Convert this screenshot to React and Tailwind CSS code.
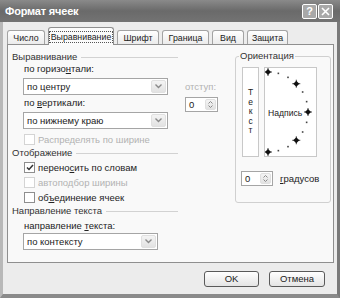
import React from "react";

const Chevron = () => (
  <svg width="7" height="5" viewBox="0 0 7 5">
    <path d="M0.5 0.5 L3.5 3.5 L6.5 0.5" fill="none" stroke="#8a8a8a" strokeWidth="1.4" />
  </svg>
);

const Select = ({ value, width }) => (
  <div className={`flex h-[17px] ${width} items-stretch border border-[#a5a5a5] bg-white`}>
    <div className="flex flex-1 items-center pl-[3px] text-[#222]">{value}</div>
    <div className="m-[1px] flex w-[15px] items-center justify-center rounded-[2px] border border-[#e0e0e0] bg-gradient-to-b from-[#f4f4f4] to-[#e2e2e2]">
      <Chevron />
    </div>
  </div>
);

const Spinner = ({ width }) => (
  <div className={`flex h-[15px] ${width} items-stretch border border-[#a5a5a5] bg-white`}>
    <div className="flex flex-1 items-center pl-[3px] text-[#222]">0</div>
    <div className="m-[1px] flex w-[11px] flex-col items-center justify-center gap-[1px] rounded-[2px] border border-[#e0e0e0] bg-gradient-to-b from-[#f4f4f4] to-[#e2e2e2]">
      <svg width="5" height="3" viewBox="0 0 5 3">
        <path d="M0.5 2.5 L2.5 0.5 L4.5 2.5" fill="none" stroke="#8a8a8a" strokeWidth="1" />
      </svg>
      <svg width="5" height="3" viewBox="0 0 5 3">
        <path d="M0.5 0.5 L2.5 2.5 L4.5 0.5" fill="none" stroke="#8a8a8a" strokeWidth="1" />
      </svg>
    </div>
  </div>
);

const Checkbox = ({ label, checked, disabled }) => (
  <div className="ml-[12px] flex h-[13px] items-center gap-[3px]">
    <div
      className={`flex h-[11px] w-[11px] items-center justify-center border bg-white ${
        disabled ? "border-[#d4d4d4]" : "border-[#8e8e8e]"
      }`}
    >
      {checked && (
        <svg width="8" height="7" viewBox="0 0 8 7">
          <path d="M1 3.5 L3 5.5 L7 1" fill="none" stroke="#333" strokeWidth="1.5" />
        </svg>
      )}
    </div>
    <span className={disabled ? "text-[#b2b2b2]" : "text-[#222]"}>{label}</span>
  </div>
);

const GroupLabel = ({ children, className = "" }) => (
  <div className={`flex h-[12px] items-center gap-[4px] ${className}`}>
    <span className="text-[#333]">{children}</span>
    <div className="h-px flex-1 bg-[#d2d2d2]" />
  </div>
);

const Tab = ({ label, width, active }) =>
  active ? (
    <div
      className={`relative z-10 -mb-px flex h-[18px] ${width} items-center justify-center rounded-t-[3px] border border-b-0 border-[#8f8f8f] bg-[#fbfbfb]`}
    >
      <span className="border border-dotted border-[#555] px-[1px] leading-[10px] text-[#222]">{label}</span>
    </div>
  ) : (
    <div
      className={`flex h-[14px] ${width} items-center justify-center rounded-t-[3px] border border-b-0 border-[#a3a3a3] bg-gradient-to-b from-[#ffffff] to-[#ebebeb] text-[#222]`}
    >
      {label}
    </div>
  );

const Orientation = () => {
  const cx = 3;
  const cy = 44;
  const r = 40;
  const big = [-90, -45, 0, 45, 90];
  const small = [-75, -60, -30, -15, 15, 30, 60, 75];
  const pt = (a) => [cx + r * Math.cos((a * Math.PI) / 180), cy + r * Math.sin((a * Math.PI) / 180)];
  return (
    <svg width="51" height="88" viewBox="0 0 51 88">
      {small.map((a) => {
        const [x, y] = pt(a);
        return <rect key={a} x={x - 0.8} y={y - 0.8} width="1.6" height="1.6" fill="#444" />;
      })}
      {big.map((a) => {
        const [x, y] = pt(a);
        return (
          <g key={a}>
            <polygon points={`${x},${y - 3} ${x + 3},${y} ${x},${y + 3} ${x - 3},${y}`} fill="#111" />
            <path d={`M${x - 4} ${y} H${x + 4} M${x} ${y - 4} V${y + 4}`} stroke="#111" strokeWidth="0.8" />
          </g>
        );
      })}
      <text x="3" y="47.5" fontSize="8.6" fill="#222" fontFamily="Liberation Sans, sans-serif">
        Надпись
      </text>
    </svg>
  );
};

export default function App() {
  return (
    <div className="flex h-[298px] w-[340px] flex-col font-['Liberation_Sans',sans-serif] text-[9.5px] leading-[12px]">
      {/* title bar */}
      <div className="flex h-[22px] shrink-0 items-center justify-between bg-gradient-to-b from-[#8a8a8a] via-[#6a6a6a] to-[#737373] pl-[5px] pr-[7px]">
        <span className="text-[11px] font-bold tracking-[-0.2px] text-white">Формат ячеек</span>
        <div className="flex gap-[1px]">
          <div className="flex h-[15px] w-[15px] items-center justify-center rounded-[2px] border border-white bg-[#a8a8a8] text-[11px] font-bold text-white">
            ?
          </div>
          <div className="flex h-[15px] w-[15px] items-center justify-center rounded-[2px] border border-white bg-[#a8a8a8]">
            <svg width="9" height="9" viewBox="0 0 9 9">
              <path d="M1 1 L8 8 M8 1 L1 8" stroke="#fff" strokeWidth="1.6" />
            </svg>
          </div>
        </div>
      </div>

      {/* body */}
      <div className="flex flex-1 flex-col border-x-[3px] border-b-[4px] border-l-[#b8b8b8] border-r-[#7a7a7a] border-b-[#8a8a8a] bg-[#ececec]">
        <div className="flex items-end gap-[3px] pl-[4px] pt-[5px] text-[8.8px]">
          <Tab label="Число" width="w-[38px]" />
          <Tab label="Выравнивание" width="w-[66px]" active />
          <Tab label="Шрифт" width="w-[42px]" />
          <Tab label="Граница" width="w-[47px]" />
          <Tab label="Вид" width="w-[32px]" />
          <Tab label="Защита" width="w-[41px]" />
        </div>

        <div className="ml-[4px] flex h-[219px] w-[327px] border border-[#8f8f8f] bg-[#f9f9f9] pl-[4px] pt-[6px]">
          {/* left column */}
          <div className="flex w-[166px] flex-col">
            <GroupLabel>Выравнивание</GroupLabel>
            <div className="ml-[12px] h-[12px] text-[#222]">
              по горизо<u>н</u>тали:
            </div>
            <div className="ml-[11px] mt-[3px]">
              <Select value="по центру" width="w-[145px]" />
            </div>
            <div className="ml-[12px] mt-[2px] h-[12px] text-[#222]">
              по <u>в</u>ертикали:
            </div>
            <div className="ml-[11px] mt-[3px]">
              <Select value="по нижнему краю" width="w-[145px]" />
            </div>
            <div className="mt-[4px]">
              <Checkbox label="Распределять по ширине" disabled />
            </div>
            <GroupLabel className="mt-[1px]">Отображение</GroupLabel>
            <div className="mt-[2px]">
              <Checkbox
                label={
                  <>
                    перено<u>с</u>ить по словам
                  </>
                }
                checked
              />
            </div>
            <div className="mt-[2px]">
              <Checkbox label="автоподбор ширины" disabled />
            </div>
            <div className="mt-[2px]">
              <Checkbox
                label={
                  <>
                    об<u>ъ</u>единение ячеек
                  </>
                }
              />
            </div>
            <GroupLabel className="mt-[1px]">Направление текста</GroupLabel>
            <div className="ml-[12px] mt-[3px] h-[12px] text-[#222]">
              направление <u>т</u>екста:
            </div>
            <div className="ml-[11px] mt-[1px]">
              <Select value="по контексту" width="w-[135px]" />
            </div>
          </div>

          {/* indent */}
          <div className="ml-[7px] flex w-[33px] flex-col">
            <div className="mt-[30px] h-[12px] text-[#b2b2b2]">отступ:</div>
            <div className="mt-[4px]">
              <Spinner width="w-[33px]" />
            </div>
          </div>

          {/* orientation */}
          <fieldset className="-mt-px ml-[17px] h-[153px] w-[96px] rounded-[3px] border border-[#d0d0d0] pl-[6px]">
            <legend className="ml-[-3px] h-[12px] px-[1px] text-[#333]">Ориентация</legend>
            <div className="mt-[5px] flex gap-[5px]">
              <div className="flex h-[90px] w-[17px] flex-col items-center justify-center border border-[#c8c8c8] bg-white text-[8.5px] leading-[9.5px] text-[#222]">
                <span>Т</span>
                <span>е</span>
                <span>к</span>
                <span>с</span>
                <span>т</span>
              </div>
              <div className="h-[90px] w-[53px] border border-[#c8c8c8] bg-white">
                <Orientation />
              </div>
            </div>
            <div className="-ml-px mt-[14px] flex items-center gap-[7px]">
              <Spinner width="w-[32px]" />
              <span className="text-[#222]">
                <u>г</u>радусов
              </span>
            </div>
          </fieldset>
        </div>

        <div className="flex justify-end gap-[10px] pr-[12px] pt-[8px]">
          <div className="flex h-[16px] w-[55px] items-center justify-center rounded-[3px] border border-[#5a5a5a] bg-gradient-to-b from-[#ffffff] to-[#e4e4e4] text-[#222]">
            OK
          </div>
          <div className="flex h-[16px] w-[56px] items-center justify-center rounded-[3px] border border-[#5a5a5a] bg-gradient-to-b from-[#ffffff] to-[#e4e4e4] text-[#222]">
            Отмена
          </div>
        </div>
      </div>
    </div>
  );
}
